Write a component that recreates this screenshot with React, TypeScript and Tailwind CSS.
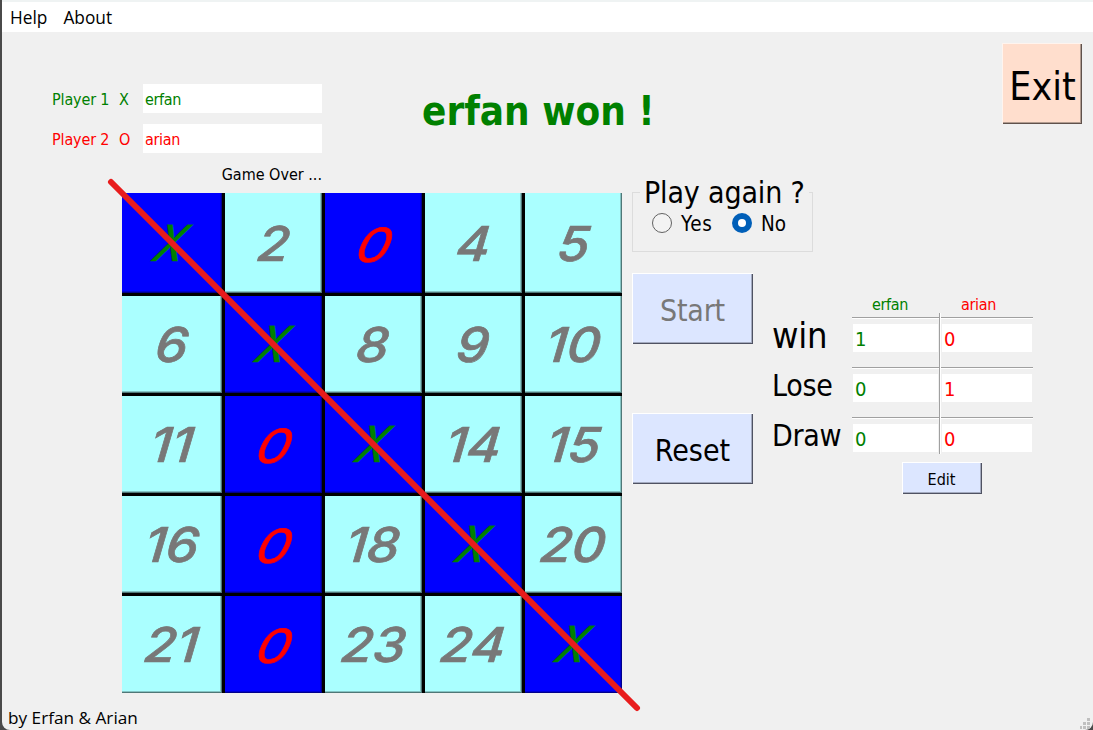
type Mark = "X" | "O" | null;

const marks: Record<number, Mark> = {
  1: "X", 3: "O", 7: "X", 12: "O", 13: "X", 17: "O", 19: "X", 22: "O", 25: "X",
};

const BEVEL =
  "border-t border-l border-t-white border-l-white shadow-[inset_-1px_-1px_0_#4f5262,inset_-2px_-2px_0_#a4abc0]";

function Cell({ n }: { n: number }) {
  const mark = marks[n] ?? null;
  const tone = mark
    ? "bg-[#0000ff] shadow-[inset_-1px_-1px_0_#00008c,inset_-2px_-2px_0_#0000d0]"
    : "bg-[#aaffff] shadow-[inset_-1px_-1px_0_#4f7777,inset_-2px_-2px_0_#84c4c4]";
  const nudge = n <= 5 ? "pt-0.5" : "pt-px";
  return (
    <div className={`flex items-center justify-center overflow-hidden ${nudge} ${tone}`}>
      {mark === "X" && (
        <span className="-translate-y-px -skew-x-20 scale-x-84 text-[50px] leading-none font-medium text-[#008000] italic [-webkit-text-stroke:0.4px_#008000]">X</span>
      )}
      {mark === "O" && (
        <span className="translate-x-px -skew-x-12 scale-x-116 text-[47px] leading-none font-normal text-[#ff0000] italic [-webkit-text-stroke:0.6px_#ff0000]">0</span>
      )}
      {!mark && (
        <span className="-skew-x-6 scale-x-108 text-[48px] leading-none font-medium text-[#787878] italic [-webkit-text-stroke:0.7px_#787878]">{n}</span>
      )}
    </div>
  );
}

function Board() {
  return (
    <div className="relative h-[500px] w-[500px]">
      <div className="grid h-full w-full grid-cols-[100px_97px_97px_97px_97px] grid-rows-[100px_97px_97px_97px_97px] gap-[3px] bg-black font-['Inter',sans-serif]">
        {Array.from({ length: 25 }, (_, i) => (
          <Cell key={i} n={i + 1} />
        ))}
      </div>
      <svg className="pointer-events-none absolute -top-5 -left-5 overflow-visible" width="540" height="540" fill="none">
        <path d="M9 9L535 535" stroke="#e81c1c" strokeWidth="6" strokeLinecap="round" />
      </svg>
    </div>
  );
}

function PlayerRow({ label, mark, name, tone }: { label: string; mark: string; name: string; tone: string }) {
  return (
    <div className={`flex h-[29px] text-base leading-[32px] ${tone}`}>
      <span className="w-[67px] tracking-[-0.15px]">{label}</span>
      <span className="w-6">{mark}</span>
      <span className="w-[179px] bg-white pl-0.5 tracking-[-0.35px]">{name}</span>
    </div>
  );
}

function ScoreColumn({ name, values, tone }: { name: string; values: number[]; tone: string }) {
  return (
    <div className={`flex flex-col ${tone}`}>
      <div className="h-[23px] pl-5 text-base leading-[21px] tracking-[-0.35px]">{name}</div>
      {values.map((v, i) => (
        <div key={i} className="h-[50px] border-t border-[#a0a0a0]">
          <div className="h-1.5 border-t border-white" />
          <div className="h-[28px] border-x border-[#f0f0f0] bg-white pl-0.5 text-xl leading-[30px]">{v}</div>
        </div>
      ))}
    </div>
  );
}

export default function App() {
  return (
    <div className="relative h-[730px] w-[1093px] overflow-hidden bg-[#4a4a4a] pl-0.5 font-['DejaVu_Sans_Condensed','DejaVu_Sans',sans-serif] text-black">
      <div className="flex h-full flex-col overflow-hidden rounded-b-lg bg-[#f0f0f0]">
        <nav className="flex h-8 shrink-0 gap-4 border-t-2 border-[#eff3f3] bg-white pl-2 font-['Open_Sans','Noto_Sans',sans-serif] text-[17.3px] leading-[32px]">
          <span>Help</span>
          <span>About</span>
        </nav>

        <header className="flex h-[161px] shrink-0 justify-between pr-[11px] pl-[50px]">
          <div className="flex w-[270px] flex-col pt-[52px]">
            <PlayerRow label="Player 1" mark="X" name="erfan" tone="text-[#008000]" />
            <div className="h-[11px]" />
            <PlayerRow label="Player 2" mark="O" name="arian" tone="text-[#ff0000]" />
            <div className="mt-3 text-right text-base leading-5">Game Over ...</div>
          </div>
          <h1 className="mr-auto ml-[100px] pt-[54px] text-[40px] leading-[50px] font-bold text-[#008000]">erfan won !</h1>
          <button className="mt-[11px] h-[81px] w-20 border-t border-l border-[#fff4ee] bg-[#ffdecd] pt-0.5 text-[39px] leading-[82px] whitespace-nowrap shadow-[inset_-1px_-1px_0_#5f514b,inset_-2px_-2px_0_#b39c90]">
            Exit
          </button>
        </header>

        <main className="flex h-[500px] shrink-0 pl-[120px]">
          <Board />
          <section className="ml-2.5 flex w-[181px] flex-col">
            <fieldset className="-mt-[20px] h-[79px] border border-[#dcdcdc] pl-[19px]">
              <legend className="-ml-3 px-1 pt-0.5 text-[30px] leading-9 tracking-[-0.15px] whitespace-nowrap">Play again ?</legend>
              <div className="-mt-px flex items-center text-[20.5px] leading-6">
                <span className="h-5 w-5 rounded-full border border-[#626262] bg-[#f3f3f3]" />
                <span className="ml-[9px] w-[51px] pt-0.5 tracking-[0.7px]">Yes</span>
                <span className="flex h-5 w-5 items-center justify-center rounded-full bg-[#005fb8]">
                  <span className="h-2 w-2 rounded-full bg-white" />
                </span>
                <span className="ml-[9px] pt-0.5">No</span>
              </div>
            </fieldset>
            <button className={`mt-[21px] h-[71px] w-[121px] bg-[#dce6ff] pt-px pr-px text-[30px] leading-[72px] tracking-[-0.2px] text-[#787878] ${BEVEL}`}>Start</button>
            <button className={`mt-[69px] h-[71px] w-[121px] bg-[#dce6ff] pt-px pr-px text-[30px] leading-[72px] ${BEVEL}`}>Reset</button>
          </section>
          <section className="-ml-[41px] flex flex-col pt-[101px]">
            <div className="flex">
              <div className="flex w-20 flex-col pt-[17px] text-[30px] leading-[50px] tracking-[-0.3px]">
                <span className="text-[36px]">win</span>
                <span>Lose</span>
                <span>Draw</span>
              </div>
              <div className="flex">
                <div className="w-[87px]">
                  <ScoreColumn name="erfan" values={[1, 0, 0]} tone="text-[#008000]" />
                </div>
                <div className="mt-[19px] h-[141px] w-0.5 border-r border-l border-r-white border-l-[#a0a0a0]" />
                <div className="w-[92px]">
                  <ScoreColumn name="arian" values={[0, 1, 0]} tone="text-[#ff0000]" />
                </div>
              </div>
            </div>
            <button className={`-mt-[5px] ml-[130px] h-[32px] w-20 bg-[#dce6ff] pr-0.5 text-base leading-[33px] ${BEVEL}`}>Edit</button>
          </section>
        </main>

        <footer className="flex flex-1 items-end justify-between pl-1.5 font-['Open_Sans','Noto_Sans',sans-serif] text-[17.2px] leading-6">
          <span>by Erfan &amp; Arian</span>
          <svg width="13" height="13" fill="#bfbfbf">
            <path d="M7 1h3v3h-3zM3 5h3v3h-3zM7 5h3v3h-3zM0 9h2v3h-2zM3 9h3v3h-3zM7 9h3v3h-3z" />
          </svg>
        </footer>
      </div>
    </div>
  );
}
